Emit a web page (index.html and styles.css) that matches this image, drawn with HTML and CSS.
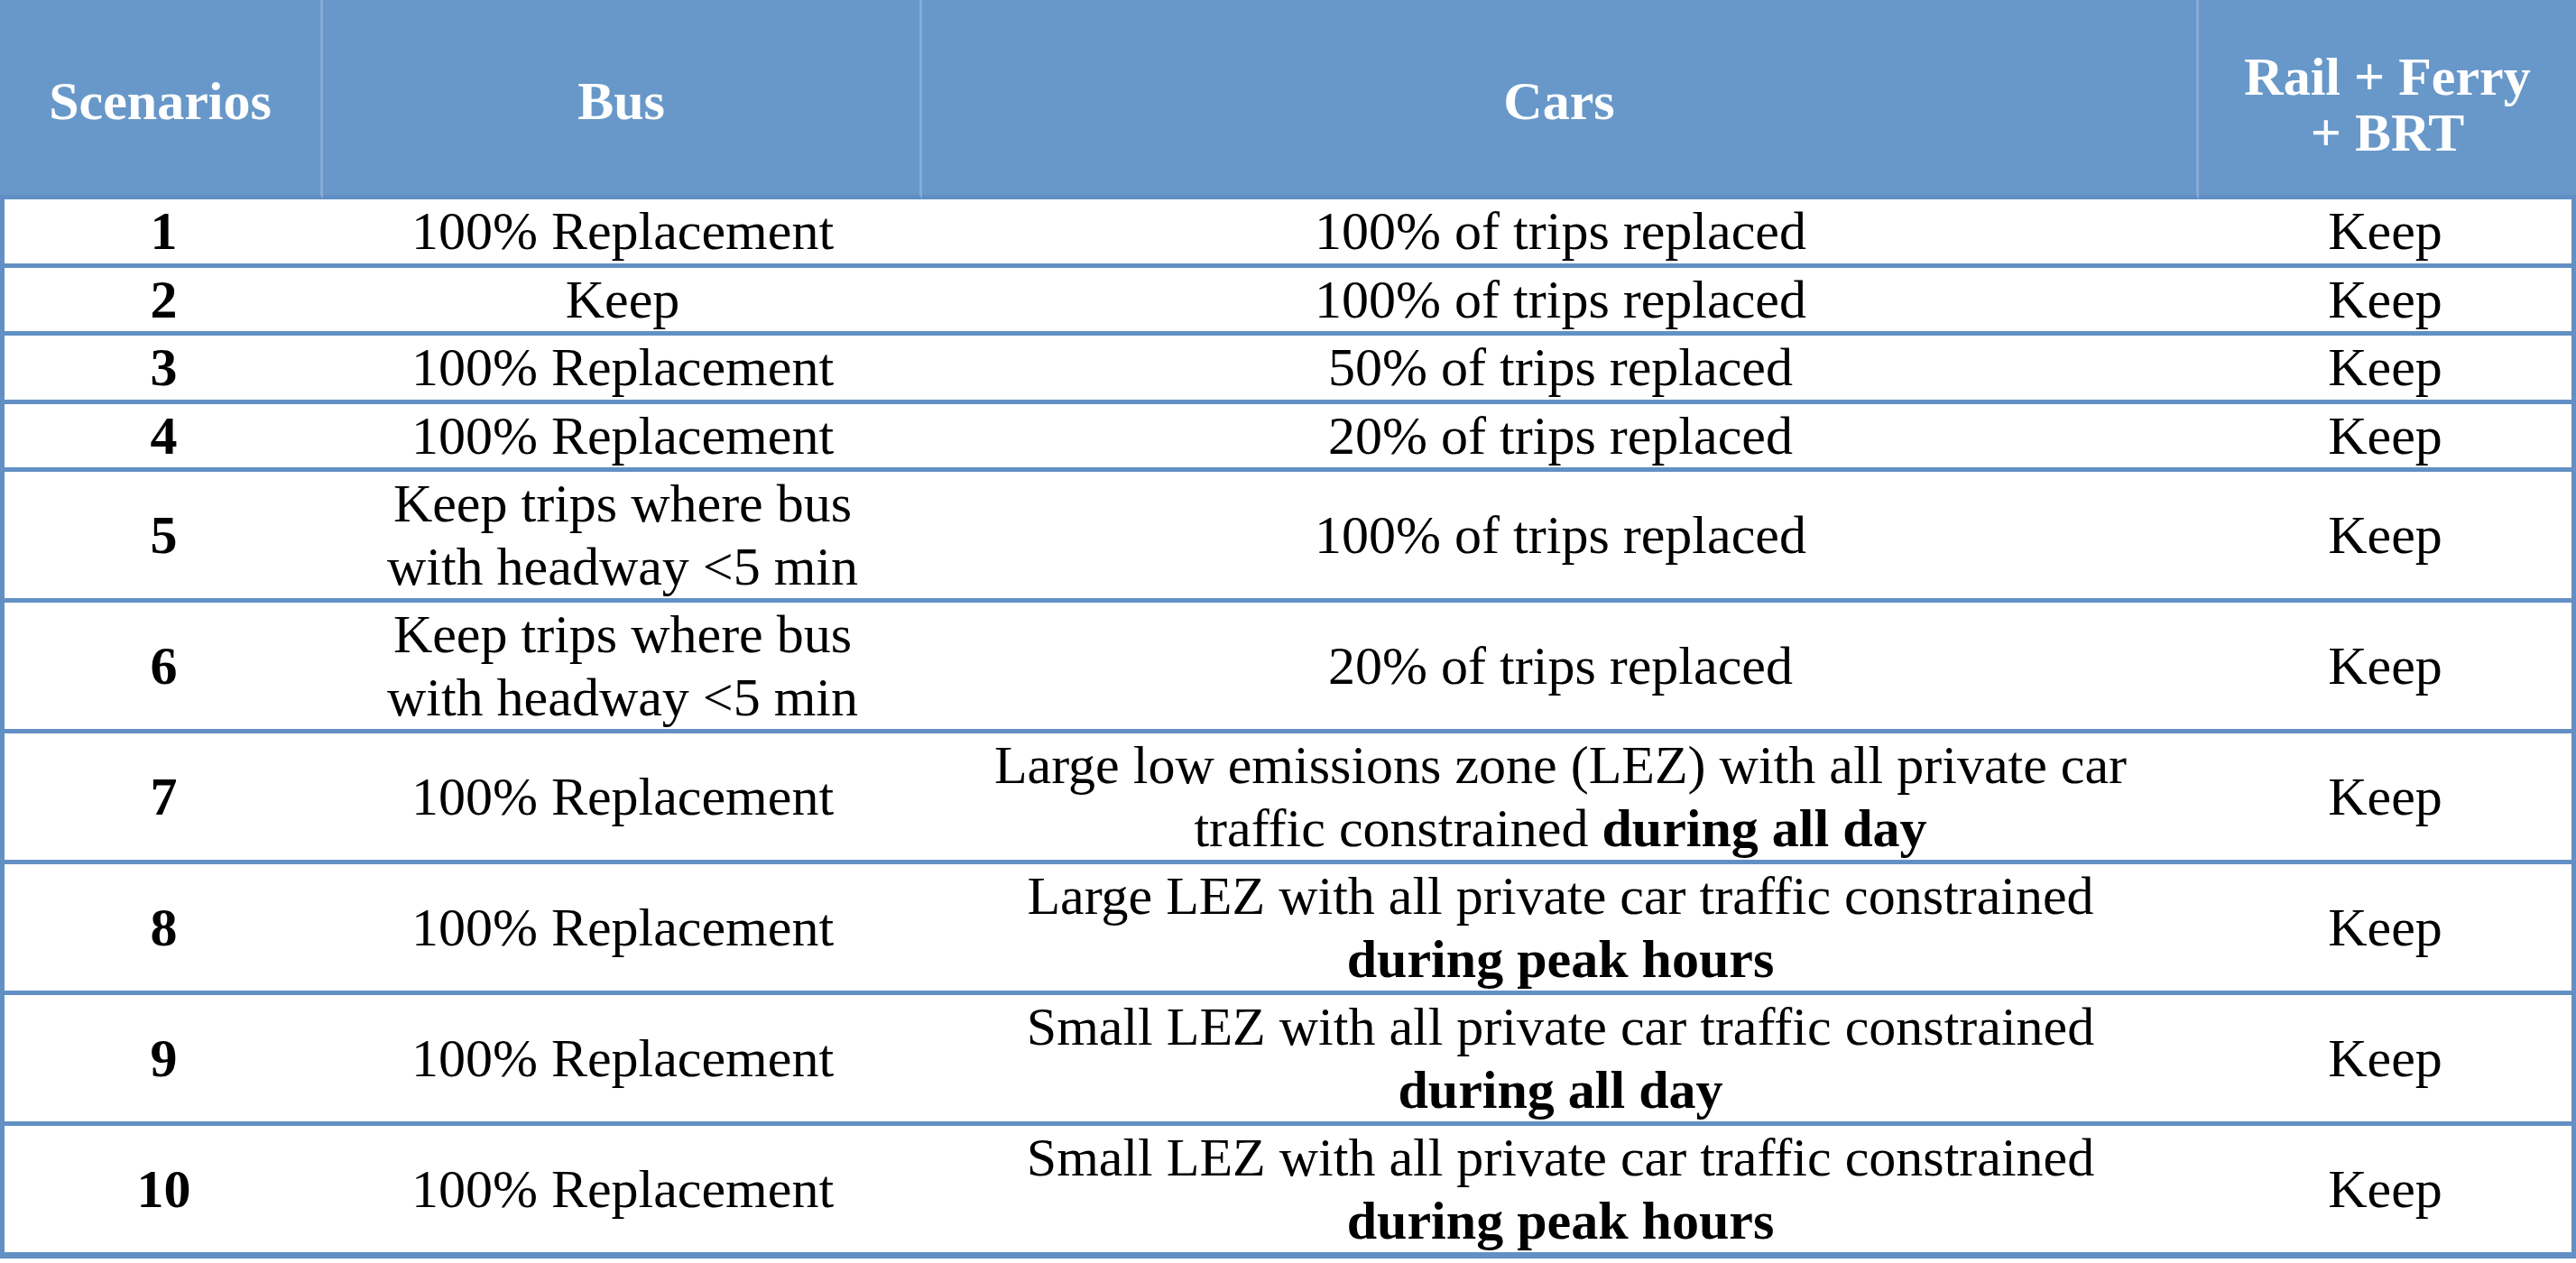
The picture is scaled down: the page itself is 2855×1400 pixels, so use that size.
FILE: index.html
```html
<!DOCTYPE html>
<html lang="en">
<head>
<meta charset="utf-8">
<title>Scenarios</title>
<link rel="stylesheet" href="styles.css">
</head>
<body>
<table class="grid">
  <thead>
    <tr>
      <th class="c1">Scenarios</th>
      <th class="c2">Bus</th>
      <th class="c3">Cars</th>
      <th class="c4">Rail + Ferry<br>+ BRT</th>
    </tr>
  </thead>
  <tbody>
    <tr><td class="num">1</td><td>100% Replacement</td><td>100% of trips replaced</td><td>Keep</td></tr>
    <tr><td class="num">2</td><td>Keep</td><td>100% of trips replaced</td><td>Keep</td></tr>
    <tr><td class="num">3</td><td>100% Replacement</td><td>50% of trips replaced</td><td>Keep</td></tr>
    <tr><td class="num">4</td><td>100% Replacement</td><td>20% of trips replaced</td><td>Keep</td></tr>
    <tr><td class="num">5</td><td>Keep trips where bus<br>with headway &lt;5 min</td><td>100% of trips replaced</td><td>Keep</td></tr>
    <tr><td class="num">6</td><td>Keep trips where bus<br>with headway &lt;5 min</td><td>20% of trips replaced</td><td>Keep</td></tr>
    <tr><td class="num">7</td><td>100% Replacement</td><td>Large low emissions zone (LEZ) with all private car<br>traffic constrained <b>during all day</b></td><td>Keep</td></tr>
    <tr><td class="num">8</td><td>100% Replacement</td><td>Large LEZ with all private car traffic constrained<br><b>during peak hours</b></td><td>Keep</td></tr>
    <tr><td class="num">9</td><td>100% Replacement</td><td>Small LEZ with all private car traffic constrained<br><b>during all day</b></td><td>Keep</td></tr>
    <tr class="last"><td class="num">10</td><td>100% Replacement</td><td>Small LEZ with all private car traffic constrained<br><b>during peak hours</b></td><td>Keep</td></tr>
  </tbody>
</table>
</body>
</html>
```

FILE: styles.css
```css
html, body {
  margin: 0;
  padding: 0;
  background: #ffffff;
}

.grid {
  width: 2855px;
  border-collapse: separate;
  border-spacing: 0;
  table-layout: fixed;
  font-family: "Liberation Serif", "Times New Roman", serif;
  font-size: 60px;
  color: #000;
}

.grid th,
.grid td {
  box-sizing: border-box;
  text-align: center;
  vertical-align: middle;
}

.grid th {
  background: #6898c9;
  color: #ffffff;
  font-weight: bold;
  line-height: 69px;
  height: 221px;
  padding: 8px 0 0 0;
  border-bottom: 5px solid #5f8ec4;
  border-right: 3px solid #86acd5;
}

.grid th.c4 {
  border-right: 0;
  line-height: 62px;
  padding-top: 15px;
}

.grid .c1 { width: 358px; }
.grid .c2 { width: 664px; }
.grid .c3 { width: 1415px; }
.grid .c4 { width: 418px; }

.grid td {
  line-height: 69.5px;
  padding: 1px 0 0 0;
  border-bottom: 5px solid #6390c4;
}

.grid td:first-child {
  border-left: 5px solid #6390c4;
}

.grid td:last-child {
  border-right: 5px solid #6390c4;
}

.grid tr.last td {
  border-bottom-width: 7px;
}

.grid td.num {
  font-weight: bold;
}

.grid b {
  font-weight: bold;
}
```
